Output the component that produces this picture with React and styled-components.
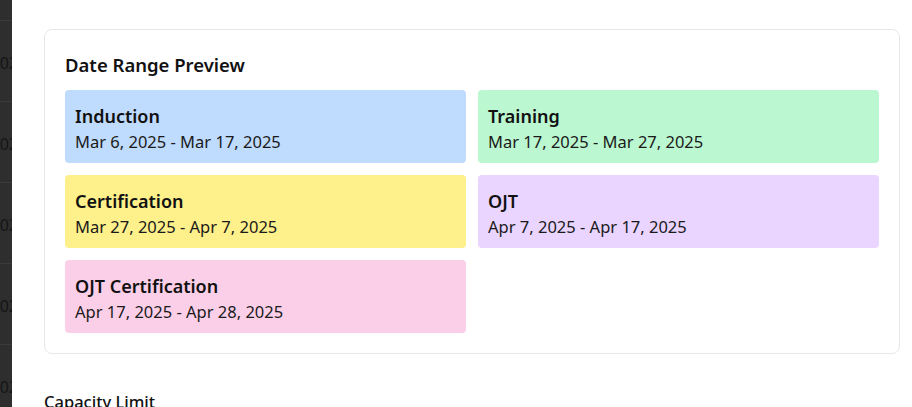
import React from 'react';
import styled, {createGlobalStyle} from 'styled-components';

const GlobalStyle = createGlobalStyle`
  html, body {
    margin: 0;
    padding: 0;
    background: #ffffff;
    font-family: "Noto Sans", "Open Sans", sans-serif;
    color: #111827;
  }
  #root {
    height: 407px;
    overflow: hidden;
  }
`;

const Screen = styled.div`
  display: flex;
  height: 407px;
  overflow: hidden;
`;

const Backdrop = styled.div`
  width: 12px;
  flex-shrink: 0;
  background: #2e2e2e;
  overflow: hidden;
  display: flex;
  flex-direction: column;
`;

const BackdropHead = styled.div`
  height: 28px;
  border-bottom: 1px solid #3a3a3a;
  display: flex;
  justify-content: flex-end;
  align-items: flex-end;
  white-space: nowrap;
  font-size: 15px;
  line-height: 20px;
  color: #171717;
  box-sizing: border-box;
  span {
    margin-right: -2px;
    transform: translateY(-18px);
  }
`;

const BackdropRow = styled.div`
  height: 81px;
  flex-shrink: 0;
  border-bottom: 1px solid #3a3a3a;
  display: flex;
  justify-content: flex-end;
  align-items: center;
  box-sizing: border-box;
  padding-top: 4px;
  white-space: nowrap;
  font-size: 16px;
  color: #151515;
  span {
    margin-right: -6px;
  }
`;

const Panel = styled.div`
  flex: 1;
  background: #ffffff;
  padding: 29px 12px 0 32px;
`;

const PreviewCard = styled.section`
  border: 1px solid #e5e7eb;
  border-radius: 8px;
  padding: 20px;
`;

const Heading = styled.h3`
  margin: 0 0 12px;
  padding-top: 2px;
  font-size: 18.5px;
  line-height: 26px;
  font-weight: 600;
  color: #111111;
`;

const Grid = styled.div`
  display: grid;
  grid-template-columns: 1fr 1fr;
  gap: 12px 12px;
`;

const Phase = styled.div`
  background: ${p => p.$bg};
  border-radius: 4px;
  padding: 12px 10px 10px;
`;

const PhaseName = styled.div`
  font-size: 18px;
  line-height: 28px;
  font-weight: 600;
  color: #111111;
`;

const PhaseDates = styled.div`
  font-size: 16.5px;
  line-height: 23px;
  color: #1a1a1a;
`;

const FieldLabel = styled.div`
  margin-top: 36px;
  font-size: 16.5px;
  line-height: 24px;
  font-weight: 500;
  color: #111111;
`;

const phases = [
  {name: 'Induction', dates: 'Mar 6, 2025 - Mar 17, 2025', bg: '#bfdbfe'},
  {name: 'Training', dates: 'Mar 17, 2025 - Mar 27, 2025', bg: '#bbf7d0'},
  {name: 'Certification', dates: 'Mar 27, 2025 - Apr 7, 2025', bg: '#fef08a'},
  {name: 'OJT', dates: 'Apr 7, 2025 - Apr 17, 2025', bg: '#e9d5ff'},
  {name: 'OJT Certification', dates: 'Apr 17, 2025 - Apr 28, 2025', bg: '#fbcfe8'},
];

const App = () => (
  <Screen>
    <GlobalStyle />
    <Backdrop>
      <BackdropHead>
        <span>Date</span>
      </BackdropHead>
      {[0, 1, 2, 3, 4].map(i => (
        <BackdropRow key={i}>
          <span>2025-03-02</span>
        </BackdropRow>
      ))}
    </Backdrop>
    <Panel>
      <PreviewCard>
        <Heading>Date Range Preview</Heading>
        <Grid>
          {phases.map(p => (
            <Phase key={p.name} $bg={p.bg}>
              <PhaseName>{p.name}</PhaseName>
              <PhaseDates>{p.dates}</PhaseDates>
            </Phase>
          ))}
        </Grid>
      </PreviewCard>
      <FieldLabel>Capacity Limit</FieldLabel>
    </Panel>
  </Screen>
);

export default App;
